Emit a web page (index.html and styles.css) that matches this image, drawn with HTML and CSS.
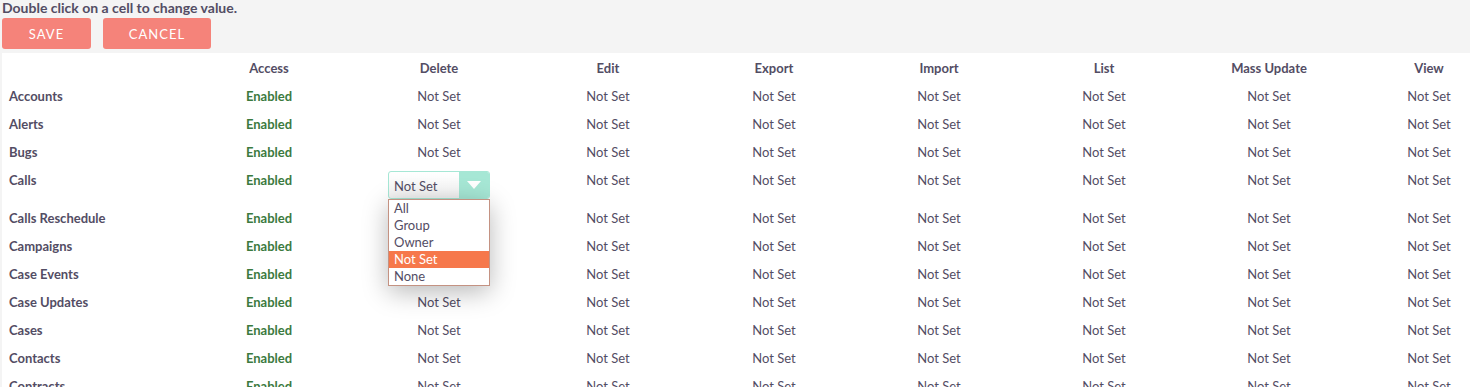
FILE: index.html
```html
<!DOCTYPE html>
<html lang="en">

<head>
    <meta charset="UTF-8">
    <title>Role access</title>
    <link rel="stylesheet" href="styles.css">
</head>

<body>
    <div class="bar">
        <p class="hint">Double click on a cell to change value.</p>
        <div class="btns">
            <button class="btn btn-save">SAVE</button>
            <button class="btn btn-cancel">CANCEL</button>
        </div>
    </div>

    <div class="panel">
        <table class="acl">
            <colgroup>
                <col style="width:182px">
                <col style="width:170px">
                <col style="width:170px">
                <col style="width:168px">
                <col style="width:164px">
                <col style="width:166px">
                <col style="width:164px">
                <col style="width:166px">
                <col style="width:154px">
            </colgroup>
            <thead>
                <tr>
                    <th></th>
                    <th>Access</th>
                    <th>Delete</th>
                    <th>Edit</th>
                    <th>Export</th>
                    <th>Import</th>
                    <th>List</th>
                    <th>Mass Update</th>
                    <th>View</th>
                </tr>
            </thead>
            <tbody>
                <tr><td class="name">Accounts</td><td class="on">Enabled</td><td>Not Set</td><td>Not Set</td><td>Not Set</td><td>Not Set</td><td>Not Set</td><td>Not Set</td><td>Not Set</td></tr>
                <tr><td class="name">Alerts</td><td class="on">Enabled</td><td>Not Set</td><td>Not Set</td><td>Not Set</td><td>Not Set</td><td>Not Set</td><td>Not Set</td><td>Not Set</td></tr>
                <tr><td class="name">Bugs</td><td class="on">Enabled</td><td>Not Set</td><td>Not Set</td><td>Not Set</td><td>Not Set</td><td>Not Set</td><td>Not Set</td><td>Not Set</td></tr>
                <tr>
                    <td class="name">Calls</td><td class="on">Enabled</td>
                    <td>
                        <div class="dd">
                            <div class="sel">
                                <span class="sel-val">Not Set</span>
                                <span class="sel-btn"><span class="caret"></span></span>
                            </div>
                            <ul class="opts">
                                <li>All</li>
                                <li>Group</li>
                                <li>Owner</li>
                                <li class="cur">Not Set</li>
                                <li>None</li>
                            </ul>
                        </div>
                    </td>
                    <td>Not Set</td><td>Not Set</td><td>Not Set</td><td>Not Set</td><td>Not Set</td><td>Not Set</td>
                </tr>
                <tr><td class="name">Calls Reschedule</td><td class="on">Enabled</td><td>Not Set</td><td>Not Set</td><td>Not Set</td><td>Not Set</td><td>Not Set</td><td>Not Set</td><td>Not Set</td></tr>
                <tr><td class="name">Campaigns</td><td class="on">Enabled</td><td>Not Set</td><td>Not Set</td><td>Not Set</td><td>Not Set</td><td>Not Set</td><td>Not Set</td><td>Not Set</td></tr>
                <tr><td class="name">Case Events</td><td class="on">Enabled</td><td>Not Set</td><td>Not Set</td><td>Not Set</td><td>Not Set</td><td>Not Set</td><td>Not Set</td><td>Not Set</td></tr>
                <tr><td class="name">Case Updates</td><td class="on">Enabled</td><td>Not Set</td><td>Not Set</td><td>Not Set</td><td>Not Set</td><td>Not Set</td><td>Not Set</td><td>Not Set</td></tr>
                <tr><td class="name">Cases</td><td class="on">Enabled</td><td>Not Set</td><td>Not Set</td><td>Not Set</td><td>Not Set</td><td>Not Set</td><td>Not Set</td><td>Not Set</td></tr>
                <tr><td class="name">Contacts</td><td class="on">Enabled</td><td>Not Set</td><td>Not Set</td><td>Not Set</td><td>Not Set</td><td>Not Set</td><td>Not Set</td><td>Not Set</td></tr>
                <tr><td class="name">Contracts</td><td class="on">Enabled</td><td>Not Set</td><td>Not Set</td><td>Not Set</td><td>Not Set</td><td>Not Set</td><td>Not Set</td><td>Not Set</td></tr>
            </tbody>
        </table>
    </div>
</body>

</html>
```

FILE: styles.css
```css
body {
    margin: 0;
    background: #f4f4f4;
    font-family: Lato, "Open Sans", sans-serif;
    font-size: 13px;
    color: #534d64;
    overflow: hidden;
}

.bar {
    padding: 0 2px 4px 2px;
}

.hint {
    margin: 0;
    font-size: 14px;
    font-weight: bold;
    line-height: 16px;
    padding-bottom: 2px;
}

.btns {
    display: flex;
    gap: 12px;
}

.btn {
    height: 31px;
    border: none;
    border-radius: 3px;
    background: #f5837a;
    color: #fff;
    font-family: inherit;
    font-size: 13px;
    letter-spacing: 1px;
    padding: 0;
}

.btn-save {
    width: 89px;
}

.btn-cancel {
    width: 108px;
}

.panel {
    margin-left: 2px;
    padding-top: 1px;
    background: #fff;
    height: 400px;
    overflow: hidden;
}

.acl {
    border-collapse: collapse;
    table-layout: fixed;
    width: 1504px;
}

.acl th,
.acl td {
    padding: 5px 4px;
    line-height: 18px;
    text-align: center;
    vertical-align: top;
    white-space: nowrap;
}

.acl th {
    font-weight: bold;
}

.acl td.name {
    text-align: left;
    font-weight: bold;
    padding-left: 7px;
}

.acl td.on {
    color: #3b7a3e;
    font-weight: bold;
}

.dd {
    position: relative;
    width: 102px;
    margin: 0 auto;
    text-align: left;
}

.sel {
    display: flex;
    height: 28px;
    border: 1px solid #a6e7d5;
    border-radius: 3px;
    background: linear-gradient(#fff, #f2f2f2);
    box-sizing: border-box;
    overflow: hidden;
}

.sel-val {
    flex: 1;
    padding-left: 5px;
    line-height: 28px;
}

.sel-btn {
    width: 30px;
    background: #a6e7d5;
    display: flex;
    align-items: center;
    justify-content: center;
}

.caret {
    width: 0;
    height: 0;
    border-left: 7px solid transparent;
    border-right: 7px solid transparent;
    border-top: 8px solid #fff;
}

.opts {
    position: absolute;
    top: 28px;
    left: 0;
    width: 102px;
    box-sizing: border-box;
    margin: 0;
    padding: 0;
    list-style: none;
    background: #fff;
    border: 1px solid #c49282;
    box-shadow: 0 6px 24px rgba(0, 0, 0, 0.28);
    z-index: 5;
}

.opts li {
    height: 17px;
    line-height: 17px;
    padding-left: 5px;
}

.opts li.cur {
    background: #f6784b;
    color: #fff;
}
```
